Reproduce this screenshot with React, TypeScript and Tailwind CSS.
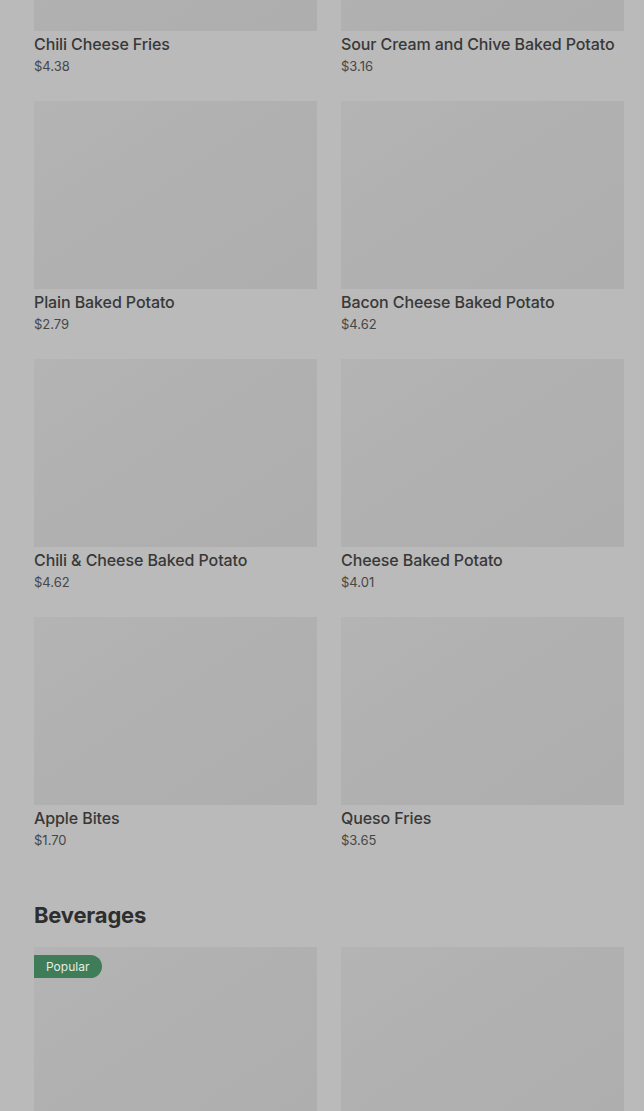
const items = [
  { name: "Chili Cheese Fries", price: "$4.38" },
  { name: "Sour Cream and Chive Baked Potato", price: "$3.16" },
  { name: "Plain Baked Potato", price: "$2.79" },
  { name: "Bacon Cheese Baked Potato", price: "$4.62" },
  { name: "Chili & Cheese Baked Potato", price: "$4.62" },
  { name: "Cheese Baked Potato", price: "$4.01" },
  { name: "Apple Bites", price: "$1.70" },
  { name: "Queso Fries", price: "$3.65" },
];

interface MenuCardProps {
  name?: string;
  price?: string;
  popular?: boolean;
}

const MenuCard = ({ name, price, popular }: MenuCardProps) => {
  return (
    <div className="flex flex-col">
      <div className="relative h-[188px] w-full bg-gradient-to-br from-[#b4b4b4] via-[#b0b0b0] to-[#aeaeae]">
        {popular && (
          <span className="absolute left-0 top-2 rounded-r-full bg-[#3f7d59] py-[3px] pl-3 pr-[13px] text-[12px] leading-[17px] text-[#e4ece6]">
            Popular
          </span>
        )}
      </div>
      {name && (
        <div className="flex flex-col pt-px pb-px">
          <span className="text-[16px] font-medium leading-6 tracking-[-0.1px] text-[#383838]">
            {name}
          </span>
          <span className="mt-px text-[13px] leading-[19px] text-[#474747]">
            {price}
          </span>
        </div>
      )}
    </div>
  );
};

export default function App() {
  return (
    <div
      className="h-[1111px] overflow-hidden bg-[#bababa]"
      style={{ fontFamily: "Inter, 'Noto Sans', sans-serif" }}
    >
      <div className="-mt-[157px] pl-[34px] pr-[20px]">
        <div className="grid grid-cols-2 gap-x-6 gap-y-6">
          {items.map((item) => (
            <MenuCard key={item.name} {...item} />
          ))}
        </div>
        <h2 className="mt-12 mb-4 text-[22px] font-bold leading-8 tracking-[-0.2px] text-[#2e2e2e]">
          Beverages
        </h2>
        <div className="grid grid-cols-2 gap-x-6 gap-y-6">
          <MenuCard popular />
          <MenuCard />
        </div>
      </div>
    </div>
  );
}
